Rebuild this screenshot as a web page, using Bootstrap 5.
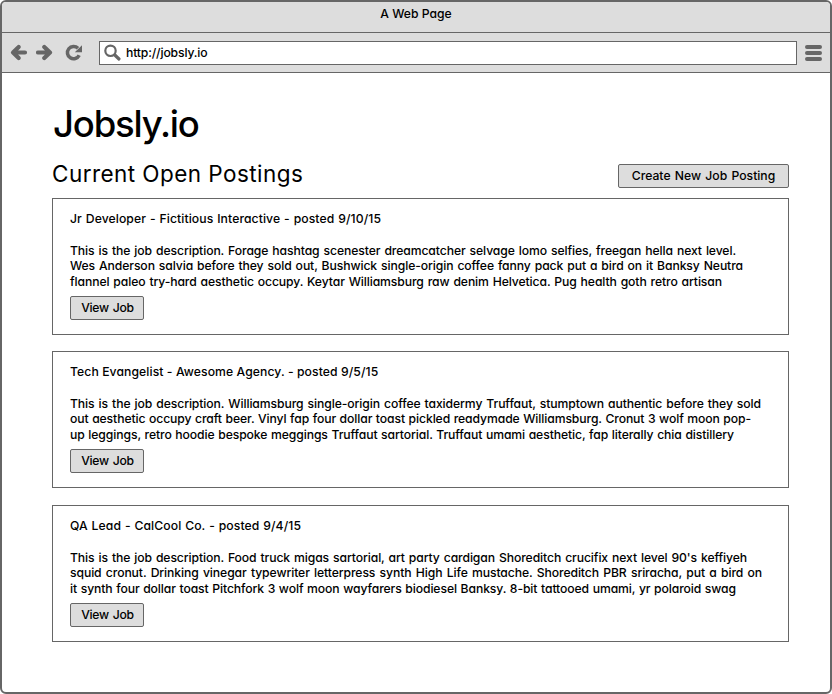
<!DOCTYPE html>
<html lang="en">
<head>
<meta charset="utf-8">
<meta name="viewport" content="width=device-width, initial-scale=1">
<title>A Web Page</title>
<link href="https://cdn.jsdelivr.net/npm/bootstrap@5.3.0/dist/css/bootstrap.min.css" rel="stylesheet">
<style>
:root { --ink: #666; --chrome: #ddd; }
body { font-family: Inter, Lato, "Liberation Sans", sans-serif; font-feature-settings: "cv11" 1, "calt" 0; font-size: 12.2px; letter-spacing: -0.1px; line-height: 15.6px; font-weight: 500; color: #000; background: #fff; overflow: hidden; }
.window { height: 694px; border: 2px solid var(--ink); border-radius: 6px; overflow: hidden; }
.titlebar { height: 31px; background: var(--chrome); border-bottom: 1px solid var(--ink); padding-top: 4px; letter-spacing: 0; }
.toolbar { height: 40px; background: var(--chrome); border-bottom: 1px solid var(--ink); padding: 0 7px 0 8px; }
.address { height: 24px; margin-left: 14px; margin-right: 7px; background: #fff; border: 1px solid var(--ink); padding-left: 4px; }
.address-text { letter-spacing: -0.15px; padding-top: 1px; }
.reload { margin-left: 7px; }
.page { padding: 29px 41px 0 50px; }
.site-name { font-size: 36.5px; line-height: 44px; font-weight: 500; letter-spacing: -1.2px; margin: 0 0 16px 1px; }
.section-title { font-size: 22.5px; line-height: 24px; font-weight: 400; letter-spacing: 0.45px; margin: 0; }
.section-row { height: 36px; }
.btn-wire { --bs-btn-bg: #ddd; --bs-btn-color: #000; --bs-btn-border-color: #666; --bs-btn-hover-bg: #ccc; --bs-btn-hover-color: #000; --bs-btn-hover-border-color: #666; --bs-btn-border-radius: 2px; --bs-btn-font-size: 12.2px; --bs-btn-line-height: 15px; --bs-btn-font-weight: 500; height: 24px; padding: 0 0 1px; word-spacing: 1px; }
.btn-create { width: 171px; margin-top: 2px; letter-spacing: 0; }
.btn-view { width: 74px; margin-top: 7px; padding-left: 1px; letter-spacing: -0.3px; }
.posting { height: 137px; border: 1px solid var(--ink); border-radius: 0; padding: 12px 17px 0; color: #000; }
.posting-gap { margin-bottom: 17px; }
.posting-title { letter-spacing: 0.08px; }
.ln { display: block; white-space: nowrap; text-align: justify; text-align-last: justify; }
.w231 { width: 231px; } .w306 { width: 306px; } .w311 { width: 311px; } .w652 { width: 652px; } .w664 { width: 664px; } .w666 { width: 666px; } .w673 { width: 673px; } .w677 { width: 677px; } .w681 { width: 681px; } .w691 { width: 691px; } .w692 { width: 692px; }
</style>
</head>
<body>
<div class="window d-flex flex-column">
  <div class="titlebar text-center">A Web Page</div>
  <div class="toolbar d-flex align-items-center">
    <svg width="18" height="18" viewBox="0 0 18 18" fill="none" stroke="#666" stroke-width="4.200" stroke-linecap="round" stroke-linejoin="round"><path d="M8.700 3L3 8.500L8.700 14M4 8.500H15"/></svg>
    <svg class="ms-2" width="18" height="18" viewBox="0 0 18 18" fill="none" stroke="#666" stroke-width="4.200" stroke-linecap="round" stroke-linejoin="round"><path d="M8.300 3L14 8.500L8.300 14M13 8.500H2"/></svg>
    <svg class="reload" width="24" height="18" viewBox="0 0 24 18"><path d="M18.200 11.300A6.200 6.200 0 1 1 17 4.200" fill="none" stroke="#666" stroke-width="3.500"/><path d="M21 1.200V8.200H13.800Z" fill="#666"/></svg>
    <div class="address flex-grow-1 d-flex align-items-center">
      <svg width="18" height="18" viewBox="0 0 18 18" fill="none" stroke="#666"><circle cx="6.500" cy="6.800" r="5.200" stroke-width="2.200"/><path d="M10.800 11L15 15" stroke-width="3.200" stroke-linecap="round"/></svg>
      <span class="address-text ms-1">http://jobsly.io</span>
    </div>
    <svg width="19" height="18" viewBox="0 0 19 18" stroke="#666" stroke-width="4" stroke-linecap="round"><path d="M3 3H16M3 9H16M3 15H16"/></svg>
  </div>
  <main class="page">
    <h1 class="site-name">Jobsly.io</h1>
    <div class="section-row d-flex justify-content-between align-items-start">
      <h2 class="section-title">Current Open Postings</h2>
      <button class="btn btn-wire btn-create" type="button">Create New Job Posting</button>
    </div>
    <article class="card posting mb-3">
      <div class="ln posting-title w311 mb-3">Jr Developer - Fictitious Interactive - posted 9/10/15</div>
      <p class="mb-0"><span class="ln w666">This is the job description. Forage hashtag scenester dreamcatcher selvage lomo selfies, freegan hella next level.</span>
      <span class="ln w673">Wes Anderson salvia before they sold out, Bushwick single-origin coffee fanny pack put a bird on it Banksy Neutra</span>
      <span class="ln w652">flannel paleo try-hard aesthetic occupy. Keytar Williamsburg raw denim Helvetica. Pug health goth retro artisan</span></p>
      <button class="btn btn-wire btn-view" type="button">View Job</button>
    </article>
    <article class="card posting posting-gap">
      <div class="ln posting-title w306 mb-3">Tech Evangelist - Awesome Agency. - posted 9/5/15</div>
      <p class="mb-0"><span class="ln w691">This is the job description. Williamsburg single-origin coffee taxidermy Truffaut, stumptown authentic before they sold</span>
      <span class="ln w681">out aesthetic occupy craft beer. Vinyl fap four dollar toast pickled readymade Williamsburg. Cronut 3 wolf moon pop-</span>
      <span class="ln w664">up leggings, retro hoodie bespoke meggings Truffaut sartorial. Truffaut umami aesthetic, fap literally chia distillery</span></p>
      <button class="btn btn-wire btn-view" type="button">View Job</button>
    </article>
    <article class="card posting">
      <div class="ln posting-title w231 mb-3">QA Lead - CalCool Co. - posted 9/4/15</div>
      <p class="mb-0"><span class="ln w677">This is the job description. Food truck migas sartorial, art party cardigan Shoreditch crucifix next level 90's keffiyeh</span>
      <span class="ln w692">squid cronut. Drinking vinegar typewriter letterpress synth High Life mustache. Shoreditch PBR sriracha, put a bird on</span>
      <span class="ln w666">it synth four dollar toast Pitchfork 3 wolf moon wayfarers biodiesel Banksy. 8-bit tattooed umami, yr polaroid swag</span></p>
      <button class="btn btn-wire btn-view" type="button">View Job</button>
    </article>
  </main>
</div>
<script src="https://cdn.jsdelivr.net/npm/bootstrap@5.3.0/dist/js/bootstrap.bundle.min.js"></script>
</body>
</html>
